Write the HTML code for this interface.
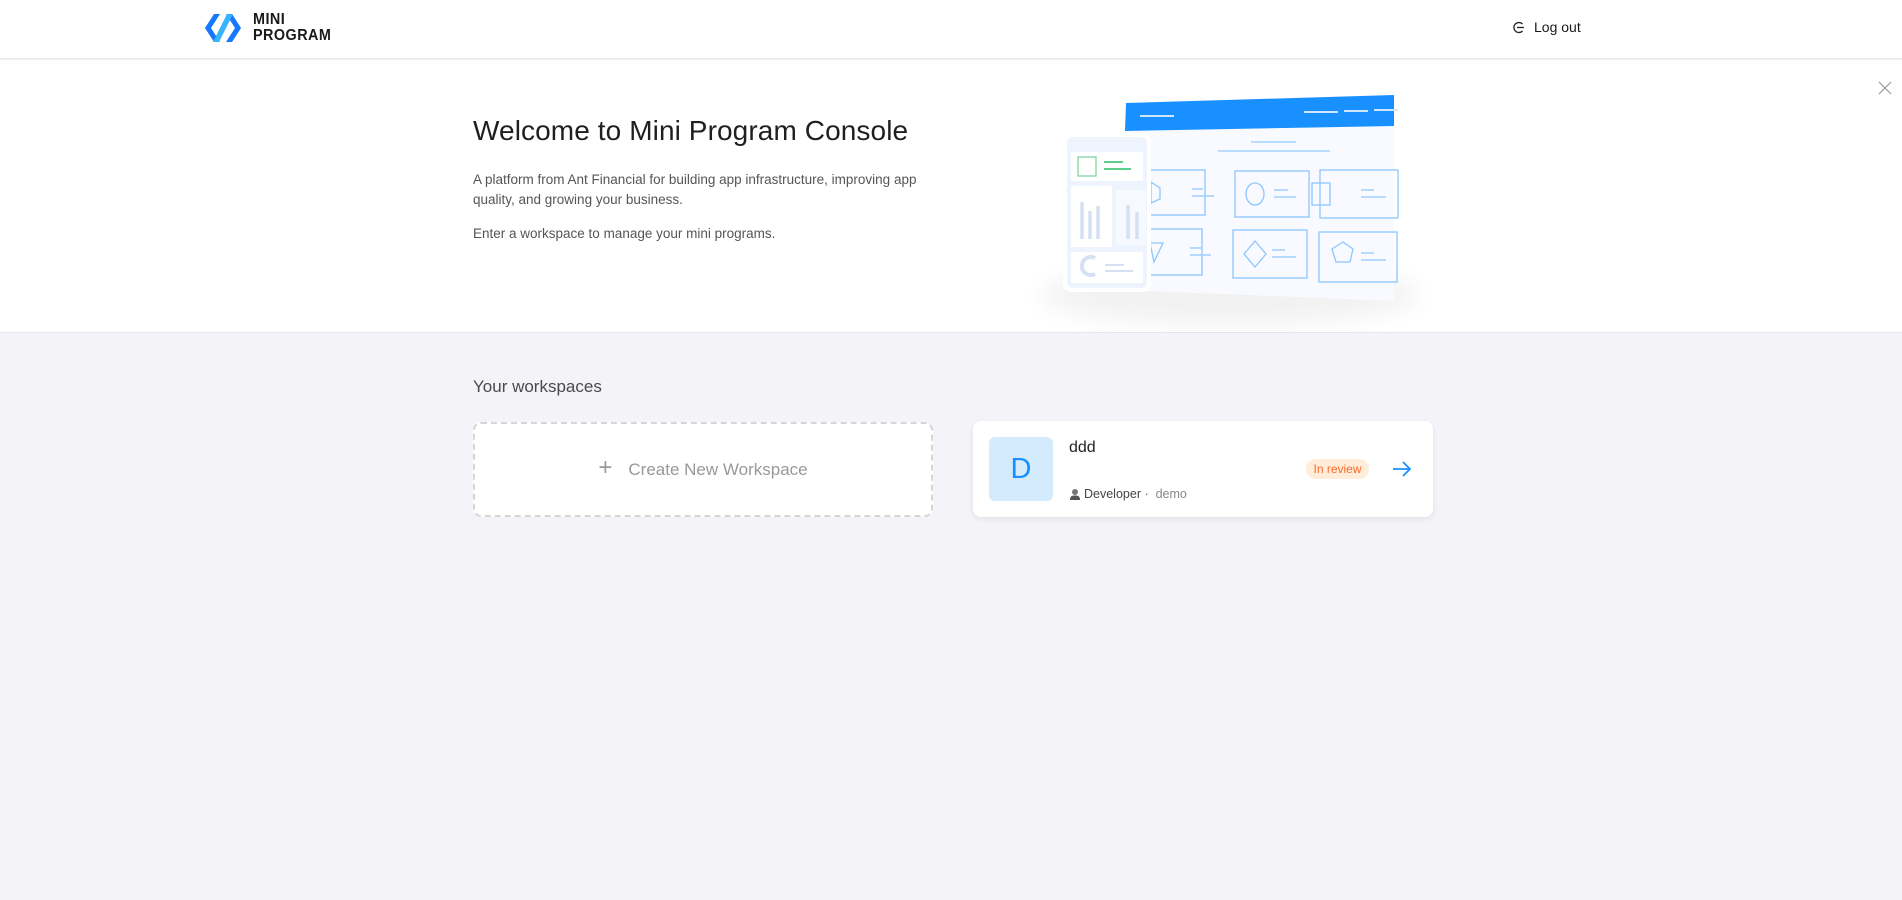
<!DOCTYPE html>
<html><head><meta charset="utf-8"><style>
*{margin:0;padding:0;box-sizing:border-box}
body{width:1902px;height:900px;background:#f4f4f8;font-family:"Liberation Sans",sans-serif;position:relative;overflow:hidden}
.hdr{position:absolute;left:0;top:0;width:1902px;height:59px;background:#fff;border-bottom:1px solid #e8e8ee;box-shadow:0 1px 3px rgba(0,0,0,.04)}
.banner{position:absolute;left:0;top:60px;width:1902px;height:273px;background:#fff;border-bottom:1px solid #e6e6ec}
.abs{position:absolute}
</style></head><body>
<div class="hdr">
  <svg class="abs" style="left:205px;top:12px" width="36" height="32" viewBox="0 0 36 32">
    <path d="M9 2 L15 2 L6 16 L15 30 L9 30 L0 16Z" fill="#1677ff"/>
    <path d="M27 2 L21 2 L30 16 L21 30 L27 30 L36 16Z" fill="#1677ff"/>
    <path d="M22 2 L28 2 L14 30 L8 30Z" fill="#36b4ff"/>
  </svg>
  <div class="abs" style="left:253px;top:12px;font-weight:bold;font-size:16px;line-height:16px;color:#1a1a1a;letter-spacing:0.5px;transform:scaleX(.9);transform-origin:left">MINI<br>PROGRAM</div>
  <svg class="abs" style="left:1512px;top:21px" width="13" height="13" viewBox="0 0 13 13"><path d="M10.5 3 A5 5 0 1 0 10.5 10" fill="none" stroke="#222" stroke-width="1.3"/><path d="M5 6.5 H12" stroke="#222" stroke-width="1.3"/></svg>
  <div class="abs" style="left:1534px;top:19px;font-size:14px;color:#1a1a1a">Log out</div>
</div>
<div class="banner">
  <div class="abs" style="left:473px;top:55px;font-size:28px;color:#1f1f1f;letter-spacing:0.1px">Welcome to Mini Program Console</div>
  <div class="abs" style="left:473px;top:110px;width:445px;font-size:13.5px;line-height:20px;color:#555">A platform from Ant Financial for building app infrastructure, improving app quality, and growing your business.</div>
  <div class="abs" style="left:473px;top:164px;font-size:13.5px;line-height:20px;color:#555">Enter a workspace to manage your mini programs.</div>
  <svg class="abs" style="left:1878px;top:21px" width="14" height="14" viewBox="0 0 14 14"><path d="M1 1L13 13M13 1L1 13" stroke="#999" stroke-width="1.2"/></svg>
  <svg class="abs" style="left:1020px;top:20px" width="420" height="253" viewBox="0 80 420 253">
    <defs><filter id="sh" x="-20%" y="-20%" width="140%" height="160%"><feGaussianBlur stdDeviation="12"/></filter></defs>
    <ellipse cx="210" cy="295" rx="190" ry="30" fill="#000" opacity=".05" filter="url(#sh)"/>
    <path d="M106 103 L374 95 L374 301 L106 290Z" fill="#f8faff"/>
    <path d="M106 103 L374 95 L374 126 L105 131Z" fill="#1890ff"/>
    <path d="M120 116H154M284 112H318M324 111H348M354 110H378" stroke="#cfe6ff" stroke-width="2"/>
    <path d="M231 142H276M198 151H310" stroke="#b9dcff" stroke-width="2"/>
    <g fill="none" stroke="#8cc6ff" stroke-width="1.3">
      <rect x="110" y="170" width="75" height="45"/><rect x="215" y="171" width="74" height="46"/><rect x="300" y="170" width="78" height="48"/>
      <rect x="110" y="229" width="72" height="46"/><rect x="213" y="230" width="74" height="48"/><rect x="299" y="232" width="78" height="50"/>
      <ellipse cx="235" cy="194" rx="9" ry="11"/><rect x="292" y="183" width="18" height="22"/>
      <path d="M235 241L246 254L235 267L224 254Z"/><path d="M323 242L333 249L330 262L316 262L312 249Z"/>
      <path d="M131 182L140 188V199L131 203Z"/><path d="M130 243H143L134 262Z"/>
    </g>
    <path d="M172 189H183M172 196H194M254 190H268M254 197H276M341 190H354M341 197H366M170 248H182M170 255H191M252 250H265M252 257H276M341 253H354M341 260H366" stroke="#9fcfff" stroke-width="1.5"/>
    <g transform="translate(-20 0)">
    <rect x="63" y="133" width="88" height="159" rx="8" fill="#fff"/>
    <rect x="67" y="137" width="80" height="151" rx="6" fill="#eef4fd"/>
    <rect x="71" y="152" width="72" height="29" fill="#fff"/>
    <rect x="78" y="157" width="18" height="19" fill="none" stroke="#7fd6a0" stroke-width="1.3"/>
    <path d="M104 162H123M104 169H131" stroke="#5ccf8a" stroke-width="2"/>
    <rect x="71" y="186" width="41" height="61" fill="#fff"/>
    <rect x="116" y="190" width="30" height="55" fill="#f6f9fe"/>
    <path d="M82 202V239M90 211V239M98 206V239M128 205V239M137 212V239" stroke="#d5e1f2" stroke-width="3.5"/>
    <rect x="71" y="252" width="72" height="31" fill="#fff"/>
    <path d="M95 258A9 9 0 1 0 95 274" fill="none" stroke="#d5e1f2" stroke-width="4"/>
    <path d="M105 265H124M105 271H133" stroke="#d5e1f2" stroke-width="2"/>
    </g>
  </svg>
</div>
<div class="abs" style="left:473px;top:377px;font-size:17px;color:#4a4a4a;font-weight:500">Your workspaces</div>
<div class="abs" style="left:473px;top:422px;width:460px;height:95px;background:#fff;border:2px dashed #d6d6d6;border-radius:8px;display:flex;align-items:center;justify-content:center;color:#999;font-size:17px">
  <span style="font-size:24px;font-weight:300;margin-right:16px;margin-top:-3px">+</span>Create New Workspace</div>
<div class="abs" style="left:973px;top:421px;width:460px;height:96px;background:#fff;border-radius:8px;box-shadow:0 2px 6px rgba(0,0,0,.08)">
  <div class="abs" style="left:16px;top:16px;width:64px;height:64px;background:#d3ebfd;border-radius:6px;color:#1890ff;font-size:29px;display:flex;align-items:center;justify-content:center">D</div>
  <div class="abs" style="left:96px;top:18px;font-size:16px;color:#222">ddd</div>
  <svg class="abs" style="left:96px;top:67px" width="12" height="12" viewBox="0 0 12 12"><circle cx="6" cy="4" r="3" fill="#777"/><path d="M1 12C1 8 3 7.5 6 7.5S11 8 11 12Z" fill="#555"/></svg>
  <div class="abs" style="left:111px;top:66px;font-size:12.5px;color:#444">Developer <span style="color:#666">·</span>&nbsp; <span style="color:#888">demo</span></div>
  <div class="abs" style="left:333px;top:38px;width:63px;height:20px;border-radius:10px;background:#ffedd9;color:#ff6a2a;font-size:12px;line-height:20px;text-align:center">In review</div>
  <svg class="abs" style="left:419px;top:40px" width="20" height="16" viewBox="0 0 20 16"><path d="M1 8H18M11 1L18 8L11 15" fill="none" stroke="#1890ff" stroke-width="1.8"/></svg>
</div>
</body></html>
